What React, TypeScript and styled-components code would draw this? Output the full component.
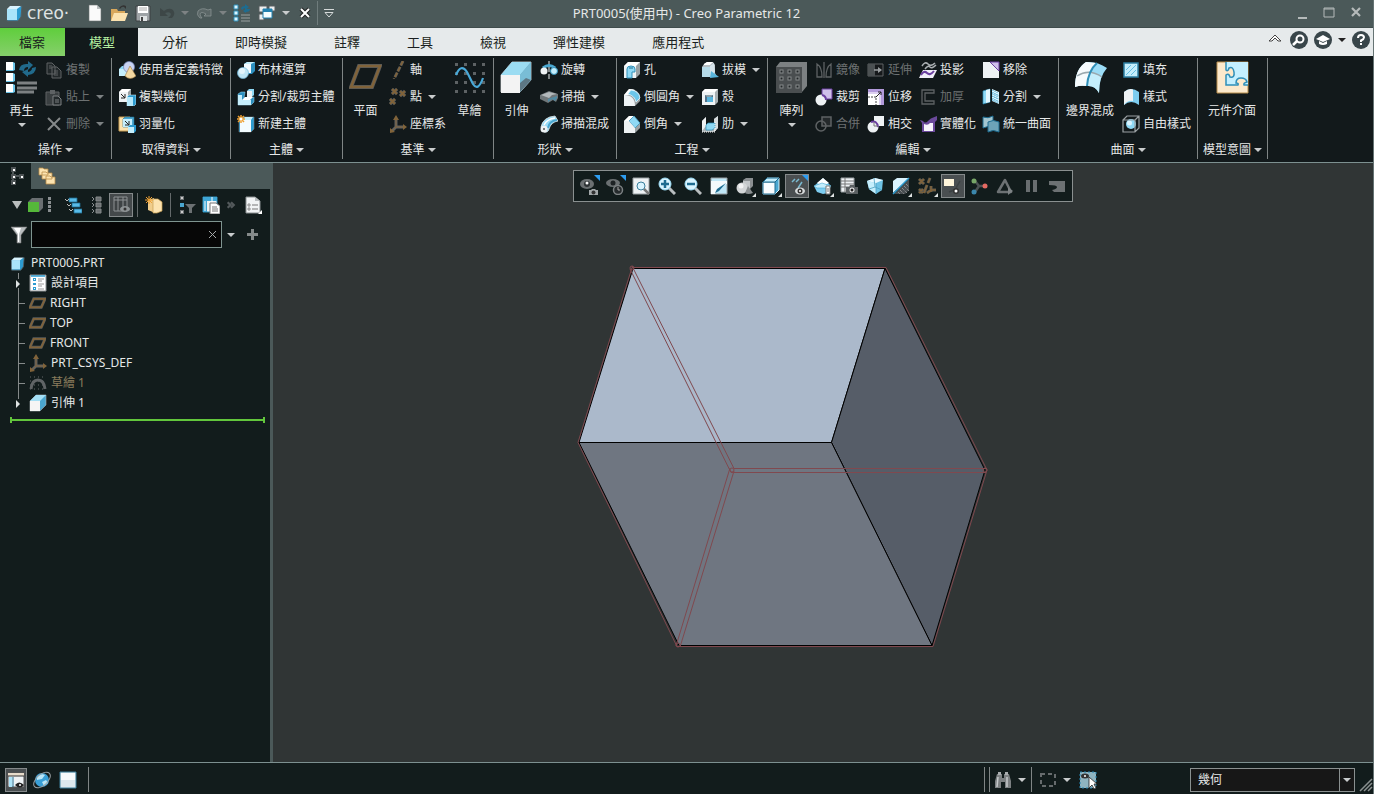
import React, { useState } from 'react';
import styled, { createGlobalStyle, css } from 'styled-components';

const c = {
  bar: '#4b5959',
  ribbon: '#12191b',
  panel: '#121c1c',
  line: '#7d9090',
  divider: '#7f8585',
  text: '#e6e8e8',
  dim: '#6d7172',
  tabs: '#e6eaeb',
  canvas: '#303535',
};

const GlobalStyle = createGlobalStyle`
  * { box-sizing: border-box; }
  body {
    margin: 0;
    background: ${c.canvas};
    color: ${c.text};
    font: 12px/20px "Noto Sans", "Noto Sans CJK TC", sans-serif;
  }
  button, input, select { font: inherit; color: inherit; }
  button { border: 0; padding: 0; background: none; cursor: pointer; }
`;

/* ---------- drawings ---------- */

const W = '#eef2f4';
const CY = '#8fd9f5';
const BL = '#2f8fb8';
const GR = '#5e6264';
const BR = '#80633a';
const PU = '#6b3fa0';

const small: Record<string, React.ReactNode> = {
  part: <><path d="M2 5l3-3h12l-1 11-3 4H2z" fill="#2c9bd0" stroke="#565e60" /><path d="M2 5h10v11H2z" fill="#a9e4fa" /><path d="M2 5l3-3h11l-4 3z" fill="#d9f4ff" /></>,
  newDoc: <><path d="M3 1h8l4 4v12H3z" fill="#fafafa" stroke="#6c7474" strokeWidth=".6" /><path d="M11 1v4h4z" fill="#b9bdbf" /></>,
  open: <><path d="M9 4q3-4 7-2v3l-2-2q-2-1-4 2z" fill="#333" /><path d="M1 5h6l1 2h7v10H1z" fill="#d9a85c" /><path d="M1 17l3-8h14l-3 8z" fill="#fce3b0" /></>,
  save: <><path d="M2 2h14v15H2z" fill="#9ea3a6" stroke="#3c4142" /><path d="M4 2h10v7H4z" fill="#fff" /><path d="M6 12h7v5H6z" fill="#dfe3e4" /><path d="M7 13h2v4H7z" fill="#444" /><path d="M5 4h8M5 6h8" stroke="#aaa" /></>,
  undo: <path d="M2 4v8h8L7 9q5-2 6 1 0 2-3 4h4q4-4 1-8-4-3-9 1z" fill="#3d4747" />,
  redo: <path d="M16 5v7H9l2-2Q6 7 5 10q0 2 2 4H5q-4-3-2-7 4-4 10-1z" fill="#5b6767" stroke="#889292" strokeWidth=".8" />,
  regen: <><path d="M1 1h4v4H1zM1 7h4v4H1zM1 13h4v4H1z" fill="#d9f4ff" stroke={BL} /><path d="M8 11h9M8 14h9M8 17h9" stroke="#9aa1a1" /><path d="M8 5q0-3 4-3V0l4 3-4 3V4q-2 0-2 2zM17 5q0 3-4 3v1l-3-2 3-2" fill="#1e6c90" /></>,
  windows: <><path d="M1 2h8v6H1zM11 2h6v5h-6zM1 10h5v6H1z" fill="#eceeee" stroke="#595f60" /><path d="M5 5h9v9H5z" fill="#f6feff" stroke="#2382b0" /><path d="M5 5h9v3H5z" fill="#2382b0" /></>,
  copy: <path d="M2 2h5l3 3v8H2zM7 6h5l4 4v7H7zM4 5h3M4 7h3M9 10h4M9 12h4M9 14h4" fill="#22282a" stroke={GR} />,
  paste: <><path d="M1 4h13v13H1z" fill="#3a3f41" stroke={GR} /><path d="M5 2h5v4H5z" fill={GR} /><path d="M8 8h5l3 3v6H8z" fill="#23292b" stroke="#7c8082" /><path d="M10 12h4M10 14h4" stroke="#7c8082" /></>,
  del: <path d="M3 3l12 12M15 3L3 15" stroke="#85898a" strokeWidth="2" />,
  udf: <><path d="M1 8l3-3h7v8l-2 2H1z" fill={CY} /><path d="M1 8h8v7H1z" fill="#c5eefc" /><circle cx="11" cy="6" r="5.500" fill="#c9d3f2" stroke="#7484b8" strokeWidth=".7" /><path d="M12 5l6 10q-6 5-11 0z" fill="#f4d8a2" stroke="#9d7b3e" strokeWidth=".6" /></>,
  copyGeom: <><path d="M1 4l3-3h9v10l-3 3H1z" fill="#9aa1a4" /><path d="M1 4l3-3h9l-3 3z" fill="#fff" /><path d="M1 4h9v10H1z" fill={W} /><path d="M3 6l4 4M7 6v4H3" stroke="#222" fill="none" /><path d="M9 9l2-2h7v9l-2 2H9z" fill="#2c9bd0" stroke="#d9f4ff" strokeWidth=".5" /><path d="M9 9h6v9H9z" fill="#b5e8fb" /></>,
  light: <><path d="M1 2h11v14H1z" fill="#fce3b0" stroke="#c79d52" /><path d="M5 4l2-2h9v8l-2 2H5z" fill="#4aa7d0" stroke="#1e6c90" strokeWidth=".6" /><path d="M5 4h9v8H5z" fill="#c5eefc" /><path d="M7 6l4 4M11 6v4H7" stroke="#222" fill="none" /><path d="M10 12l2-2h6v6l-2 2h-6z" fill="#2c9bd0" /><path d="M10 12h6v6h-6z" fill="#c5eefc" /></>,
  bool: <><path d="M7 3l3-2h8v9l-3 3H7z" fill="#2c8fbf" /><path d="M7 3h7v9H7z" fill="#f3fbff" /><path d="M7 3l3-2h8l-4 2z" fill="#c5eefc" /><circle cx="6" cy="12" r="5.500" fill="#bfe5f5" stroke="#6fb6d8" strokeWidth=".7" /><circle cx="5" cy="10" r="3" fill="#e4f5fc" /></>,
  splitBody: <><path d="M10 3l2-2h5v6l-2 2h-5z" fill="#8fd9f5" /><path d="M10 3h5v6h-5z" fill={W} /><path d="M1 6l3-2h4l-1 6h7l3-1v5l-3 3H1z" fill="#2c8fbf" stroke="#9bdcf6" strokeWidth=".5" /><path d="M1 7h4v5h9v5H1z" fill="#c5eefc" /><path d="M5 12l3-3h8l-3 3z" fill="#fff" /></>,
  newBody: <><path d="M2 5l3-3h12v12l-3 3H2z" fill="#2c9bd0" stroke="#7a8386" strokeWidth=".6" /><path d="M3 5h11v12H3z" fill="#f3fbff" /><path d="M5 5l3-3h8l-2 3z" fill="#c5eefc" /><path d="M4 0v8M0 4h8M1 1l6 6M7 1L1 7" stroke="#f0a030" strokeWidth="1.500" /><circle cx="4" cy="4" r="1.500" fill="#fff" /></>,
  axis: <><path d="M14 0L5 18" stroke="#55595b" strokeWidth="3" strokeDasharray="5 1.500" /><path d="M14 0L5 18" stroke={BR} strokeWidth="1.800" strokeDasharray="5 1.500" /></>,
  points: <><path d="M3 1l5 5m0-5L3 6M11 3l5 5m0-5l-5 5M1 11l5 5m0-5l-5 5" stroke="#50565a" strokeWidth="3.200" /><path d="M3 1l5 5m0-5L3 6M11 3l5 5m0-5l-5 5M1 11l5 5m0-5l-5 5" stroke={BR} strokeWidth="2" /></>,
  csys: <><path d="M7 3v9h8M7 12l-4 4" stroke={GR} strokeWidth="3" fill="none" /><path d="M7 3v9h8M7 12l-4 4" stroke={BR} fill="none" /><path d="M7 0l3 5H4zM18 12l-4 3V9zM1 18v-5l5 4z" fill={BR} /></>,
  revolve: <><path d="M9 0v4m0 2v5m0 2v5" stroke="#a2a8ab" strokeWidth="1.500" /><path d="M3 7q6-5 12 0" stroke="#4aa7d0" strokeWidth="3" fill="none" /><circle cx="4" cy="10" r="3.500" fill={W} /><circle cx="14" cy="10" r="3.500" fill="#c5eefc" stroke={BL} /></>,
  sweep: <><path d="M0 7l9-4 9 3v4l-2 4-3-2-5 3-8-4z" fill="#70777a" /><path d="M1 7l8-3 8 2-5 1-3 3z" fill="#b2b8bb" /><path d="M8 11l9-3v2l-2 3-3-2-4 3z" fill="#4f8aa3" /></>,
  sweptBlend: <><path d="M1 12Q3 2 15 1l3 5q-7 1-9 8-1 4-5 3z" fill="#9bdcf6" stroke="#dfe6e9" strokeWidth=".8" /><path d="M8 13q1-7 9-8" stroke="#4aa7d0" fill="none" strokeWidth="2" /><path d="M4 10Q7 4 15 3" stroke="#fff" fill="none" strokeWidth="1.500" /><circle cx="4" cy="14" r="3.500" fill={W} /><circle cx="4" cy="14" r="1" fill="#555" /></>,
  hole: <><path d="M1 5l4-4h12v12l-4 4H1z" fill="#9aa1a4" /><path d="M1 5l4-4h12l-4 4z" fill="#fff" /><path d="M1 5h12v12H1z" fill={W} /><path d="M4 17V8q0-3 4-3t4 3v3H9v6z" fill={CY} stroke={BL} /><path d="M6 7h4" stroke="#1e6c90" /></>,
  round: <><path d="M1 7l5-6q10 0 11 8v4l-5 5H1z" fill="#9aa1a4" /><path d="M1 7l5-6q4 0 6 1L8 7z" fill="#fff" /><path d="M8 2q8 1 9 8l-4 4Q12 8 5 6z" fill="#6cc6ea" stroke="#e2f5fd" strokeWidth=".8" /><path d="M1 7q11 0 11 11H1z" fill={W} /></>,
  chamfer: <><path d="M1 6l5-5h5l6 7v5l-5 5H1z" fill="#9aa1a4" /><path d="M1 6l5-5h5L6 6z" fill="#fff" /><path d="M6 6l5-5 6 7-5 5z" fill="#8fd9f5" stroke={BL} strokeWidth=".7" /><path d="M1 6h5l6 7v5H1z" fill={W} /></>,
  draft: <><path d="M3 3l3-2h6l2 3v8l2 4H1V6z" fill="#b9c1c5" /><path d="M3 3l3-2h6l-3 3H3z" fill="#fff" /><path d="M1 6h8v10H1z" fill="#b6dbe9" /><path d="M9 5l4-3 1 9-5 5z" fill="#d6e4ea" /><path d="M10 10l8 6-9 1z" fill="#59b5dc" /></>,
  shell: <><path d="M1 4l3-3h13v13l-3 3H1z" fill="#a7afb2" /><path d="M1 4l3-3h13l-3 3z" fill="#fff" /><path d="M1 4h13v13H1z" fill={W} /><path d="M4 7h8v7H4z" fill="#53738a" /><path d="M6 9h6v5H6z" fill="#58b4dc" /><path d="M4 7h8L10 9H6z" fill="#8d9fa8" /></>,
  rib: <><path d="M1 6l4-4v8h8V4l4-3v12l-4 4H1z" fill="#aab2b5" /><path d="M1 6l4-4v9l-4 5z" fill={W} /><path d="M13 4l4-3v12l-4 4z" fill="#d6dcde" /><path d="M5 10l2-2h7v5l-3 2H5z" fill={CY} stroke={BL} strokeWidth=".7" /><path d="M1 17h13V6" stroke="#fff" strokeDasharray="1 1" fill="none" /></>,
  mirror: <path d="M2 3q5 3 5 13H2zM16 3q-5 3-5 13h5zM9 1v16" fill="none" stroke={GR} strokeWidth="1.300" />,
  trim: <><path d="M7 1h10v10H7z" fill="#cfc0ea" stroke={PU} /><circle cx="6" cy="12" r="5.500" fill={W} /><path d="M7 7q4 1 4 5" stroke={PU} strokeWidth="2" fill="none" /></>,
  merge: <><path d="M7 2h9v9H7z" fill="#24292b" stroke={GR} strokeWidth="1.500" /><circle cx="6" cy="11" r="5" fill="none" stroke={GR} strokeWidth="1.500" /></>,
  extend: <><path d="M1 3h15v12H1z" fill="#16191b" stroke={GR} /><path d="M1 3h7v12H1z" fill="#4c5153" /><path d="M7 9h5" stroke="#9a9ea0" strokeWidth="1.500" /><path d="M11 6l4 3-4 3z" fill="#9a9ea0" /></>,
  offset: <><path d="M1 1h16v16H1z" fill="#fff" /><path d="M1 1h16v16h-3V4H1z" fill="#b29adb" /><path d="M1 4h13v13h-2V6H1z" fill="#dcd0f0" /><path d="M1 9h8v8" stroke="#444" strokeDasharray="2 1" fill="none" /><path d="M9 9l5-5m-3 0h3v3" stroke="#222" fill="none" /></>,
  intersect: <><path d="M7 1h10v10H7z" fill={W} /><circle cx="6" cy="12" r="5.500" fill={W} /><path d="M4 7q6-2 7 5" stroke={PU} strokeWidth="2" fill="none" /><path d="M7 7v4h4" stroke="#777" fill="none" /></>,
  project: <><path d="M3 5q3-5 6-2t7-1M6 8q3-4 5-2t6-2" stroke="#a9aeb1" strokeWidth="1.500" fill="none" /><path d="M4 9h14l-4 8H0z" fill="#f1eef8" /><path d="M2 14q3-5 6-2t7-2" stroke={PU} strokeWidth="2" fill="none" /></>,
  thicken: <path d="M15 2H3v14h12v-3H6V5h9z" fill="none" stroke={GR} strokeWidth="1.300" />,
  solidify: <><path d="M1 5l3 1q2 3 5 0t4-3l5-2v4l-2 2v10H3V8z" fill="#6b4a9c" /><path d="M5 9q4 2 6-1l3 0v8H5z" fill="#f7f4fc" /></>,
  remove: <><path d="M1 1h16v16H1z" fill={W} /><path d="M8 1h9v9z" fill="#cfc0ea" stroke={PU} /></>,
  split: <><path d="M1 3l7-2v13l-7 2z" fill={CY} stroke={BL} strokeWidth=".7" /><path d="M4 2l4-1v13l-4 1z" fill="#e3f6fd" /><path d="M10 1l7 3v12l-7-3z" fill="#d9f4ff" /><path d="M11 2v12M13 3v12M15 4v12M10 5l7 3M10 8l7 3M10 11l7 3" stroke="#4aa7d0" strokeDasharray="1 1" /></>,
  unify: <><path d="M1 2q5 2 10-1v9l-10 3z" fill="#a3c6d1" stroke="#1e6c90" /><path d="M6 7q5-3 11 0v10q-6-3-11 0z" fill="#6ca3b8" stroke="#1e6c90" /></>,
  fill: <><path d="M2 2h14v14H2z" fill="#c5eefc" stroke="#2c7fa3" strokeWidth="1.500" /><path d="M4 9l5-5M4 14L14 4M9 14l5-5" stroke="#65bfe4" /></>,
  style: <><path d="M2 4q7-6 15 0v13q-8-6-15 0z" fill="#7dcdf0" /><path d="M2 4q5-4 9-2.500v11.500q-5-1-9 4z" fill={W} /></>,
  freestyle: <><circle cx="9" cy="9" r="5" fill="#8fd9f5" /><circle cx="7.500" cy="8" r="2.500" fill="#d9f4ff" /><path d="M1 5l4-4h12v12l-4 4H1zM1 5h12v12M13 5l4-4" fill="none" stroke="#9aa0a3" strokeWidth="1.200" /></>,
  planeS: <><path d="M5 4h12l-4 9H1z" fill="none" stroke="#55595b" strokeWidth="3" /><path d="M5 4h12l-4 9H1z" fill="none" stroke={BR} strokeWidth="1.800" /></>,
  sketchS: <><path d="M1 3h16M1 7h16M1 11h16M1 15h16" stroke="#65696b" strokeDasharray="1 3" /><path d="M2 15q1-9 7-9t7 9" stroke="#606466" strokeWidth="3" fill="none" /></>,
  extrudeS: <><path d="M1 7l6-6h10v10l-6 6H1z" fill="#4aa7d0" stroke="#aab2b5" strokeWidth=".6" /><path d="M1 7l6-6h10l-6 6z" fill="#a5e0f6" /><path d="M1 7h10v10H1z" fill="#f5f5f5" /></>,
  designItems: <><path d="M1 1h16v16H1z" fill="#fff" stroke="#8a8f91" /><path d="M2 2h14" stroke="#2c9bd0" strokeWidth="1.500" /><path d="M4 4h3v3H4zM4 9h3v2H4zM4 13h3v3H4z" fill="#2c9bd0" /><path d="M5 5h1v1H5zM5 14h1v1H5z" fill="#fff" /><path d="M9 5h6M9 7h4M9 10h6M9 12h4M9 15h6" stroke="#999" /></>,
  treeTab: <><path d="M6 2v14M6 9h8" stroke="#8d9395" /><path d="M4 0h5v5H4zM4 7h5v5H4zM4 13h5v5H4zM12 7h5v5h-5z" fill="#4d5355" /><path d="M6 2h2v2H6zM6 9h2v2H6zM6 15h2v2H6zM14 9h2v2h-2z" fill="#fff" /></>,
  folders: <><path d="M1 1h4l1 1h4v6H1zM4 5h4l1 1h5v6H4zM8 9h4l1 1h4v7H8z" fill="#fce3b0" stroke="#b98d4a" strokeWidth=".8" /></>,
  greenCube: <><path d="M2 6l4-4h11v10l-4 4H2z" fill="#6a6f71" /><path d="M2 6h11v10H2z" fill="#55b83a" /></>,
  dots: <path d="M3 1h3v3H3zM3 5h3v3H3zM3 9h3v3H3zM3 13h3v3H3z" fill="#8a8f91" />,
  treeExp: <><path d="M5 2h8v4H5zM8 7h8v4H8zM10 13h8v4h-8z" fill="#58bbe8" stroke="#1e6c90" strokeWidth=".8" /><path d="M1 3l2 2 2-2M3 8l2 2 2-2M5 13l2 2 2-2" stroke="#bbb" fill="none" /></>,
  treeCol: <><path d="M8 1h5v4H8zM8 7h5v4H8zM8 13h5v4H8z" fill="#6c7173" stroke="#85898a" /><path d="M4 1l2 2-2 2M4 7l2 2-2 2M4 13l2 2-2 2" stroke="#8a8f91" fill="none" /></>,
  columns: <><path d="M2 1h13v14H2zM6 1v14M11 1v14M2 4h13" fill="#3e4345" stroke="#8d9294" /><ellipse cx="13" cy="13" rx="5" ry="3" fill="#8d9294" /><circle cx="13" cy="13" r="1.500" fill="#333" /></>,
  tag: <><path d="M3 4l6-2 1 15-7-3z" fill="#f0cd8c" /><path d="M8 3h5l4 3v9l-5 2H8z" fill="#fce3b0" stroke="#c79d52" strokeWidth=".7" /><path d="M4 0v8M0 4h8M1 1l6 6M7 1L1 7" stroke="#f0a030" /></>,
  treeFilter: <><path d="M2 0h4v4H2zM2 7h4v4H2zM2 14h4v4H2z" fill="#6c7173" /><path d="M3 1h2v2H3zM3 15h2v2H3z" fill="#ccc" /><path d="M2 7h4v4H2z" fill="#4aa7d0" /><path d="M7 8h11l-4 4v5h-3v-5z" fill="#6c7173" /></>,
  table: <><path d="M1 1h14v15H1z" fill={W} stroke={BL} /><path d="M1 1h14v4H1zM1 5h4v11H1z" fill="#3fa6d6" /><path d="M3 5v10M10 1v7" stroke="#fff" /><path d="M8 7h6l4 3v8H8z" fill="#fff" stroke="#777" /><path d="M10 11h5M10 13h6M10 15h6" stroke="#777" /></>,
  more: <path d="M3 4l5 5-5 5M9 4l5 5-5 5" stroke="#53595b" strokeWidth="4" fill="none" />,
  list: <><path d="M2 1h9l5 4v12H2z" fill="#f2f4f5" stroke="#8a8f91" /><path d="M11 1v4h5z" fill="#b9bdbf" /><path d="M4 8h2v2H4zM4 12h2v2H4z" fill="none" stroke="#777" strokeWidth=".8" /><path d="M8 9h6M8 13h6" stroke="#777" /><path d="M18 14v4h-4z" fill="#fff" /></>,
  funnel: <><path d="M1 1h16l-6 8v8H7V9z" fill="#b9bec0" stroke="#777" strokeWidth=".6" /><path d="M4 2h7L9 8v8H8V8z" fill="#fff" /></>,
  eyeCam: <><ellipse cx="7" cy="7" rx="7" ry="5" fill="#6b7072" /><circle cx="7" cy="7" r="3" fill="#2c3133" /><circle cx="7" cy="6" r="1.500" fill="#fff" /><path d="M9 13h2l1-1h3l1 1h2v5H9z" fill="#a2a7a9" /><circle cx="13.500" cy="15.500" r="2" fill="#333" /></>,
  eyeClock: <><ellipse cx="7" cy="6" rx="7" ry="4" fill="#6b7072" /><circle cx="7" cy="6" r="2.500" fill="#1d2224" /><circle cx="12" cy="13" r="4.500" fill="#262b2d" stroke="#7c8183" strokeWidth="1.500" /><path d="M12 10v3h2" stroke="#aaa" fill="none" /></>,
  refit: <><path d="M1 1h16v16H1z" fill={W} stroke="#9aa1a4" /><circle cx="9" cy="9" r="4" fill="#d9f4ff" stroke="#3a7f9c" /><path d="M12 12l5 5" stroke="#777" strokeWidth="2.500" /></>,
  zoomIn: <><path d="M11 11l6 6" stroke="#b9bec0" strokeWidth="3" /><circle cx="7" cy="7" r="6" fill="#d9f4ff" stroke="#9bdcf6" /><path d="M3 7h8M7 3v8" stroke="#1e6c90" strokeWidth="2.500" /></>,
  zoomOut: <><path d="M11 11l6 6" stroke="#b9bec0" strokeWidth="3" /><circle cx="7" cy="7" r="6" fill="#d9f4ff" stroke="#9bdcf6" /><path d="M3 7h8" stroke="#1e6c90" strokeWidth="2.500" /></>,
  repaint: <><path d="M1 1h16v16H1z" fill="#bfe7f6" stroke="#9aa1a4" /><path d="M1 4h16v3Q9 8 5 17H1z" fill="#f4fafc" /><path d="M16 6l-7 8-4 2 2-4z" fill="#1e6c90" /></>,
  shading: <><path d="M7 3l3-2h7v8l-3 3H7z" fill="#8a8f91" /><path d="M7 4h7v8H7z" fill="#c3c7c9" /><circle cx="6" cy="11" r="5.500" fill="#d3d6d7" /><circle cx="5" cy="9" r="2.500" fill="#f2f3f3" /><path d="M12 9l5 7q-5 2-8 0z" fill="#8a8f91" /></>,
  saved: <><path d="M1 5l4-4h12v12l-4 4H1z" fill="#4aa7d0" stroke="#d9f4ff" /><path d="M1 5h12v12H1z" fill="#fafdff" stroke="#1e6c90" /><path d="M1 5l4-4h12l-4 4z" fill="#c5eefc" stroke="#1e6c90" /></>,
  annot: <><path d="M4 5l3-3M8 5l3-3M10 11l4-6" stroke="#79b9cf" strokeWidth="1.500" /><ellipse cx="12" cy="14" rx="5" ry="3.500" fill="#d6dadb" /><circle cx="12" cy="14" r="2.500" fill="#333" /><circle cx="12" cy="14" r="1" fill="#fff" /></>,
  views: <><path d="M9 1l8 8-3 7-5 1-6-2-3-6z" fill="#7dcdf0" /><path d="M9 1l6 5-7 3-5-3z" fill="#fff" /><path d="M0 9l8-3 9 3-3 2H3z" fill="#c5eefc" stroke="#4aa7d0" strokeWidth=".6" /><path d="M12 9h4v8h-4z" fill="#fff" stroke="#777" /><path d="M13 12h2M13 14h2" stroke="#777" /></>,
  viewMgr: <><path d="M1 1h13v14H1z" fill={W} stroke="#9aa1a4" /><path d="M1 4h13M1 7h13M1 10h8M5 1v14" stroke="#777" /><path d="M6 10h3l1-2h4l1 2h3v7H6z" fill="#5b6062" /><circle cx="12" cy="13" r="2.500" fill="#eee" /><circle cx="12" cy="13" r="1.500" fill="#222" /></>,
  persp: <><path d="M1 4l8-3 8 2-1 10-6 4-7-5z" fill="#6ec2e4" /><path d="M1 4l9 2v11l-7-5z" fill="#c5eefc" /><path d="M1 4l8-3 8 2-7 3z" fill="#e9f8fe" /><path d="M10 6v11M3 12l6-2 7 3M8 1l1 9" stroke="#4a9fc2" fill="none" strokeWidth=".8" /></>,
  section: <><path d="M1 16V4l4-3h12z" fill="#d9f4ff" /><path d="M17 2v11l-4 4H2z" fill="#484e51" /><path d="M17 1L1 17" stroke="#2c9bd0" strokeWidth="1.500" /><path d="M6 15l2 2M8 13l4 4M10 11l5 5M12 9l5 5M14 7l3 3" stroke="#aaa" strokeDasharray="1 1" /></>,
  datum: <><path d="M1 2l5 5m0-5L1 7M12 1l-2 5m-1 2l-3 8M13 9v6M13 13h5M13 13l-4 3M1 12l4 4m0-4l-4 4" stroke="#5d5a50" strokeWidth="3" fill="none" /><path d="M1 2l5 5m0-5L1 7M12 1l-2 5m-1 2l-3 8M13 9v6M13 13h5M13 13l-4 3M1 12l4 4m0-4l-4 4" stroke={BR} strokeWidth="1.500" fill="none" /></>,
  annotBox: <><path d="M0 2h10v7H0z" fill="#fff6dc" /><path d="M12 11l4-7M5 15l5-2" stroke="#3c4143" strokeWidth="1.500" /><circle cx="12" cy="14" r="3" fill="#333" /><circle cx="12" cy="14" r="1.500" fill="#fff" /></>,
  nodes: <><path d="M5 4l4 5-4 6M9 9h5" stroke="#4c5153" strokeWidth="2.500" fill="none" /><circle cx="4" cy="4" r="2.500" fill="#77a567" /><circle cx="15" cy="9" r="2.500" fill="#e56a62" /><circle cx="4" cy="15" r="2.500" fill="#3b87ac" /></>,
  triangle: <><path d="M9 3l6 12H2z" fill="none" stroke="#6c7173" strokeWidth="2.500" strokeLinejoin="round" /><path d="M12 10l5 4-5 4z" fill="#7e8385" /></>,
  pause: <path d="M4 3h4v12H4zM11 3h4v12h-4z" fill="#696e70" />,
  resume: <path d="M1 4h16v11H6l-2-2q5-1 5-3T1 8z" fill="#6c7173" />,
  layout: <><path d="M1 2h16v14H1z" fill={W} stroke="#555" /><path d="M1 2h16v3H1z" fill="#e7dccb" /><path d="M1 5h16" stroke="#333" /><path d="M2 6h3v10H2z" fill="#aee4f8" /><path d="M6 6v10" stroke="#1e6c90" /><path d="M8 14q4-5 9 0-4 5-9 0z" fill="#222" /><circle cx="13" cy="14" r="1" fill="#fff" /></>,
  globe: <><circle cx="9" cy="9" r="7" fill="#3a9fd6" /><path d="M4 6q4-4 8-2l-3 4-5 1zM9 11l4-2 2 3-4 3z" fill="#b9e6f8" /><ellipse cx="9" cy="9" rx="10" ry="5.500" transform="rotate(-42 9 9)" fill="none" stroke="#9aa0a3" /></>,
  blank: <><path d="M1 1h16v16H1z" fill="#dde8ed" stroke="#3a7f9c" /><path d="M2 2h14v7H2z" fill="#f6fafc" /></>,
  find: <><path d="M3 3h5v4h2V3h5l2 7v7h-6v-6H7v6H1v-7z" fill="#7c8082" /><path d="M4 1h3v3H4zM11 1h3v3h-3z" fill="#a9adaf" /><path d="M4 6l-1 10M13 6v10" stroke="#c5c9cb" strokeWidth="1.500" /></>,
  region: <path d="M2 3h14v12H2z" fill="none" stroke="#666b6d" strokeWidth="2" strokeDasharray="4 3" />,
  pick: <><path d="M1 1h16v16H1z" fill="#8fb4c0" stroke="#2382b0" strokeDasharray="2 2" /><ellipse cx="6" cy="5" rx="4" ry="2.500" fill="#333" /><circle cx="6" cy="5" r="1" fill="#fff" /><path d="M10 6v11l3-3 2 4 2-1-2-4h3z" fill="#fff" stroke="#222" strokeWidth=".8" /></>,
  search: <><circle cx="9" cy="9" r="9" fill="#39464a" /><circle cx="10" cy="8" r="3.500" fill="none" stroke="#fff" strokeWidth="2" /><path d="M7 10l-4 4" stroke="#fff" strokeWidth="2.500" /></>,
  learn: <><circle cx="9" cy="9" r="9" fill="#39464a" /><path d="M2 8l7-4 7 4-7 3z" fill="#fff" /><path d="M5 10v3q4 2 8 0v-3l-4 2z" fill="#fff" /></>,
  help: <><circle cx="9" cy="9" r="9" fill="#39464a" /><path d="M6 7q0-3 3-3t3 2.500Q12 8 9 9.500V11" stroke="#fff" strokeWidth="2" fill="none" /><path d="M8 12h2v2H8z" fill="#fff" /></>,
  collapse: <path d="M3 10l6-6 6 6h-3L9 7l-3 3z" fill="#fff" stroke="#444" />,
  min: <path d="M5 13h9v2H5z" fill="#b5baba" />,
  max: <path d="M4 4h10v9H4zM4 5h10" fill="none" stroke="#b5baba" />,
  x: <path d="M5 4l8 8M13 4l-8 8" stroke="#b5baba" strokeWidth="2.200" />,
};

const big: Record<string, React.ReactNode> = {
  regenerate: <><path d="M1 1h7v8H1zM1 12h7v8H1zM1 23h7v8H1z" fill="#fff" /><path d="M8 1l2 1v7l-2 1H1V9h7zM8 12l2 1v7l-2 1H1v-1h7zM8 23l2 1v7l-2 1H1v-1h7z" fill="#6cc6ea" /><path d="M12 22h20M12 27h20M12 31h17" stroke="#7d8183" strokeWidth="3" /><path d="M14 9q1-7 9-6V0l5 4-5 5V6q-4 0-4 4zM31 6q0 7-8 8v2l-6-5 6-3v3q4-1 4-4z" fill="#216a8c" /></>,
  plane: <><path d="M10 5h21l-8 21H2z" fill="none" stroke="#55595b" strokeWidth="4" /><path d="M10 5h21l-8 21H2z" fill="none" stroke={BR} strokeWidth="2.500" /></>,
  sketch: <><g fill="#5d6264">{[3, 12, 21, 30].map((y) => [3, 12, 21, 30].map((x) => <rect key={`${x}-${y}`} x={x - 1} y={y - 1} width="3" height="3" />))}</g><path d="M3 14q5-12 11-3l6 12q5 8 10-6" fill="none" stroke="#49a9d8" strokeWidth="2.200" /></>,
  extrude: <><path d="M1 14L12 1h19v18L20 31H1z" fill="#6fa7bd" stroke="#aab2b5" /><path d="M1 14L12 1h19L20 14z" fill="#9bdcf2" /><path d="M31 1v18l-11 12V14z" fill="#79bdd6" /><path d="M31 19L20 31v-9l6-5z" fill="#5d7784" /><path d="M1 14h19v18H1z" fill="#f3f3f3" /></>,
  pattern: <><path d="M1 6l4-5h27v24l-5 6H1z" fill="#7c8082" /><path d="M1 6h26v26H1z" fill="#4a4e50" /><g fill="#222729" stroke="#85898a">{[10, 17, 25].map((y) => [6, 14, 22].map((x) => <rect key={`${x}-${y}`} x={x - 1} y={y - 1} width="3" height="3" />))}</g></>,
  boundary: <><path d="M1 26Q1 8 12 1q11-1 21 6-8 9-8 25-4-8-12-7-7-1-12 1z" fill="#9bdcf6" /><path d="M1 26Q1 8 12 1l11 1q-9 8-10 23-7-1-12 1z" fill="#f6fbfd" /><path d="M13 25q0-8 4-13 6 0 10 4-2 7-2 16-4-8-12-7z" fill="#c5eefc" /><path d="M3 15q12-8 25 1" fill="none" stroke="#9aa8ae" strokeWidth="1.500" /><path d="M23 2q-9 8-10 23" fill="none" stroke={BL} strokeWidth="2" /></>,
  component: <><path d="M1 1h31v31H1z" fill="#fce9cc" stroke="#b98d4a" /><path d="M10 1h22v23H10z" fill="#c5f0ff" /><path d="M10 9q2 2 3-2 4-2 5 4t-4 5q-1-4-4-2z" fill="#fce9cc" /><path d="M22 24q1-2-2-2 0-5 5-5t6 4q-4 1-3 3z" fill="#fce9cc" /><path d="M10 1v8q2 2 3-2 4-2 5 4t-4 5q-1-4-4-2v10h12q1-2-2-2 0-5 5-5t6 4q-4 1-3 3h4" fill="none" stroke={BL} strokeWidth="1.500" /></>,
};

const Svg = styled.svg`
  display: block;
  flex: none;
`;

const Icon = ({ name, size = 18 }: { name: string; size?: number }) => (
  <Svg width={size} height={size} viewBox={size > 24 ? '0 0 33 33' : '0 0 18 18'} aria-hidden="true">
    {size > 24 ? big[name] : small[name]}
  </Svg>
);

const Caret = styled.span<{ $dim?: boolean; $dark?: boolean }>`
  flex: none;
  width: 0;
  border: 4px solid transparent;
  border-top-color: ${(p) => (p.$dark ? '#222' : p.$dim ? '#7d8283' : '#c9cccd')};
  border-bottom: 0;
`;

/* ---------- frame ---------- */

const Frame = styled.div`
  display: flex;
  flex-direction: column;
  min-height: 100vh;
  border-right: 1px solid #667474;
`;

const TitleBar = styled.header`
  display: grid;
  grid-template-columns: 1fr auto 1fr;
  align-items: center;
  height: 28px;
  padding-bottom: 2px;
  background: ${c.bar};
  border-bottom: 1px solid #3f4c4c;
`;

const QuickBar = styled.div`
  display: flex;
  align-items: center;
  padding-left: 5px;
`;

const Brand = styled.span`
  margin: 0 14px 0 4px;
  font: 17px/24px "DejaVu Sans", sans-serif;
  color: #dfe3e3;
`;

const QuickButton = styled.button<{ $w?: number }>`
  display: flex;
  align-items: center;
  justify-content: center;
  width: ${(p) => p.$w ?? 24}px;
  height: 24px;
`;

const QuickDivider = styled.span`
  width: 1px;
  height: 24px;
  background: #6f7c7c;
`;

const Title = styled.h1`
  margin: 0;
  font-size: 13px;
  font-weight: 400;
  line-height: 24px;
`;

const WindowButtons = styled.div`
  display: flex;
  justify-content: flex-end;
  gap: 9px;
  padding-right: 8px;
`;

const TabBar = styled.nav`
  display: flex;
  height: 28px;
  background: ${c.tabs};
`;

const Tab = styled.button<{ $kind?: 'file' | 'active' }>`
  padding: 0 23px 0 24px;
  font-size: 13px;
  color: #1a1f20;
  ${(p) => p.$kind === 'file' && css`
    padding: 0 20px 0 19px;
    background: linear-gradient(#5fce3c, #86cf6b);
  `}
  ${(p) => p.$kind === 'active' && css`
    background: ${c.ribbon};
    color: #b4efa0;
  `}
`;

const TabTools = styled.div`
  display: flex;
  align-items: center;
  gap: 6px;
  margin-left: auto;
  padding: 0 3px 4px 0;
`;

/* ---------- ribbon ---------- */

const Ribbon = styled.section`
  display: flex;
  background: ${c.ribbon};
  border-bottom: 1px solid ${c.line};
`;

const Group = styled.div<{ $w: number }>`
  display: flex;
  flex-direction: column;
  flex: none;
  width: ${(p) => p.$w}px;
  margin: 2px 0 3px;
  border-right: 1px solid ${c.divider};
`;

const GroupBody = styled.div<{ $pad: number }>`
  display: flex;
  height: 82px;
  padding-left: ${(p) => p.$pad}px;
`;

const GroupMenu = styled.button`
  display: flex;
  align-items: center;
  justify-content: center;
  gap: 3px;
  height: 19px;
  white-space: nowrap;
`;

const BigButton = styled.button<{ $w: number }>`
  display: flex;
  flex-direction: column;
  align-items: center;
  flex: none;
  width: ${(p) => p.$w}px;
  margin-right: 7px;
  padding-top: 3px;
  white-space: nowrap;

  & > svg { margin-bottom: 7px; }
  & > ${Caret} { margin-top: 2px; }
`;

const Column = styled.div<{ $w?: number }>`
  display: grid;
  grid-template-rows: repeat(3, 27px);
  flex: none;
  width: ${(p) => (p.$w ? `${p.$w}px` : 'auto')};
  margin-top: -2px;
`;

const Command = styled.button<{ $dim?: boolean }>`
  display: flex;
  align-items: center;
  gap: 3px;
  white-space: nowrap;
  color: ${(p) => (p.$dim ? c.dim : c.text)};

  & > ${Caret} { margin-left: 3px; }
`;

type Cmd = { icon: string; label: string; menu?: boolean; dim?: boolean };
type Part =
  | { kind: 'big'; icon: string; label: string; w: number; menu?: boolean }
  | { kind: 'col'; w?: number; items: Cmd[] };

const cmd = (icon: string, label: string, flags = ''): Cmd => ({
  icon,
  label,
  menu: flags.includes('m'),
  dim: flags.includes('d'),
});

const groups: { name: string; w: number; pad: number; parts: Part[] }[] = [
  { name: '操作', w: 112, pad: 5, parts: [
    { kind: 'big', icon: 'regenerate', label: '再生', w: 33, menu: true },
    { kind: 'col', items: [cmd('copy', '複製', 'd'), cmd('paste', '貼上', 'dm'), cmd('del', '刪除', 'dm')] },
  ] },
  { name: '取得資料', w: 119, pad: 6, parts: [
    { kind: 'col', items: [cmd('udf', '使用者定義特徵'), cmd('copyGeom', '複製幾何'), cmd('light', '羽量化')] },
  ] },
  { name: '主體', w: 112, pad: 6, parts: [
    { kind: 'col', items: [cmd('bool', '布林運算'), cmd('splitBody', '分割/裁剪主體'), cmd('newBody', '新建主體')] },
  ] },
  { name: '基準', w: 151, pad: 6, parts: [
    { kind: 'big', icon: 'plane', label: '平面', w: 33 },
    { kind: 'col', w: 64, items: [cmd('axis', '軸'), cmd('points', '點', 'm'), cmd('csys', '座標系')] },
    { kind: 'big', icon: 'sketch', label: '草繪', w: 33 },
  ] },
  { name: '形狀', w: 123, pad: 6, parts: [
    { kind: 'big', icon: 'extrude', label: '引伸', w: 33 },
    { kind: 'col', items: [cmd('revolve', '旋轉'), cmd('sweep', '掃描', 'm'), cmd('sweptBlend', '掃描混成')] },
  ] },
  { name: '工程', w: 151, pad: 6, parts: [
    { kind: 'col', w: 78, items: [cmd('hole', '孔'), cmd('round', '倒圓角', 'm'), cmd('chamfer', '倒角', 'm')] },
    { kind: 'col', items: [cmd('draft', '拔模', 'm'), cmd('shell', '殼'), cmd('rib', '肋', 'm')] },
  ] },
  { name: '編輯', w: 291, pad: 7, parts: [
    { kind: 'big', icon: 'pattern', label: '陣列', w: 33, menu: true },
    { kind: 'col', w: 52, items: [cmd('mirror', '鏡像', 'd'), cmd('trim', '裁剪'), cmd('merge', '合併', 'd')] },
    { kind: 'col', w: 52, items: [cmd('extend', '延伸', 'd'), cmd('offset', '位移'), cmd('intersect', '相交')] },
    { kind: 'col', w: 63, items: [cmd('project', '投影'), cmd('thicken', '加厚', 'd'), cmd('solidify', '實體化')] },
    { kind: 'col', items: [cmd('remove', '移除'), cmd('split', '分割', 'm'), cmd('unify', '統一曲面')] },
  ] },
  { name: '曲面', w: 139, pad: 6, parts: [
    { kind: 'big', icon: 'boundary', label: '邊界混成', w: 50 },
    { kind: 'col', items: [cmd('fill', '填充'), cmd('style', '樣式'), cmd('freestyle', '自由樣式')] },
  ] },
  { name: '模型意圖', w: 70, pad: 9, parts: [
    { kind: 'big', icon: 'component', label: '元件介面', w: 50 },
  ] },
];

/* ---------- model tree ---------- */

const Main = styled.main`
  display: flex;
  flex: 1;
`;

const Side = styled.aside`
  flex: none;
  width: 273px;
  background: ${c.panel};
  border-right: 3px solid ${c.bar};
`;

const SideTabs = styled.div`
  display: flex;
  height: 26px;
  background: ${c.bar};
`;

const SideTab = styled.button<{ $active?: boolean }>`
  display: flex;
  align-items: center;
  justify-content: center;
  width: 31px;
  background: ${(p) => (p.$active ? c.panel : 'none')};
`;

const TreeTools = styled.div`
  display: flex;
  align-items: center;
  height: 32px;
  padding-left: 11px;
`;

const TreeButton = styled.button<{ $w?: number; $on?: boolean }>`
  display: flex;
  align-items: center;
  justify-content: center;
  width: ${(p) => p.$w ?? 24}px;
  height: 24px;
  ${(p) => p.$on && css`
    background: #44494b;
    border: 1px solid #84898a;
  `}
`;

const TreeDivider = styled.span`
  width: 1px;
  height: 24px;
  margin: 0 4px;
  background: #646a6b;
`;

const FilterRow = styled.div`
  display: flex;
  align-items: center;
  gap: 5px;
  height: 27px;
  padding-left: 10px;
`;

const FilterBox = styled.div`
  display: flex;
  width: 191px;
  height: 27px;
  margin-left: -2px;
  background: #070707;
  border: 1px solid #7f9490;
`;

const FilterInput = styled.input`
  flex: 1;
  min-width: 0;
  padding: 0 4px;
  background: none;
  border: 0;
  outline: 0;
`;

const Tree = styled.ul`
  margin: 5px 5px 0 10px;
  padding: 0 0 6px;
  list-style: none;
  border-bottom: 2px solid #62c63c;
  position: relative;

  &::before, &::after {
    content: '';
    position: absolute;
    bottom: -4px;
    width: 2px;
    height: 6px;
    background: #62c63c;
  }
  &::before { left: 0; }
  &::after { right: 0; }
`;

const Branch = styled.ul`
  margin: 0;
  padding: 0;
  list-style: none;
`;

const Node = styled.div<{ $dim?: boolean }>`
  display: flex;
  align-items: center;
  gap: 6px;
  height: 20px;
  color: ${(p) => (p.$dim ? '#8b7d5c' : c.text)};
`;

const ChildNode = styled(Node)`
  gap: 4px;
`;

const Twig = styled.svg`
  display: block;
  flex: none;
  width: 15px;
  height: 20px;
`;

const children = [
  { icon: 'designItems', label: '設計項目', open: true },
  { icon: 'planeS', label: 'RIGHT' },
  { icon: 'planeS', label: 'TOP' },
  { icon: 'planeS', label: 'FRONT' },
  { icon: 'csys', label: 'PRT_CSYS_DEF' },
  { icon: 'sketchS', label: '草繪 1', dim: true },
  { icon: 'extrudeS', label: '引伸 1', open: true },
];

/* ---------- graphics area ---------- */

const Canvas = styled.section`
  position: relative;
  flex: 1;
  display: flex;
  background: ${c.canvas};
`;

const ModelView = styled.svg`
  display: block;
  flex: 1;
  width: 100%;
  min-width: 0;
`;

const ViewBar = styled.div`
  position: absolute;
  top: 7px;
  left: 50%;
  transform: translateX(-50%);
  display: flex;
  align-items: center;
  height: 32px;
  padding: 0 2px;
  background: ${c.panel};
  border: 1px solid #8a9090;
`;

const ViewButton = styled.button<{ $on?: boolean; $menu?: boolean; $flag?: boolean }>`
  position: relative;
  display: flex;
  align-items: center;
  justify-content: center;
  width: 24px;
  height: 24px;
  margin: 0 1px;
  border: 1px solid ${(p) => (p.$on ? '#84898a' : 'transparent')};
  background: ${(p) => (p.$on ? '#4a4f51' : 'none')};
  ${(p) => p.$menu && css`
    &::after {
      content: '';
      position: absolute;
      right: 0;
      bottom: 0;
      border: 2px solid #dfe3e3;
      border-top-color: transparent;
      border-left-color: transparent;
    }
  `}
  ${(p) => p.$flag && css`
    &::before {
      content: '';
      position: absolute;
      right: 0;
      top: 0;
      border: 3px solid #2d9cf0;
      border-bottom-color: transparent;
      border-left-color: transparent;
    }
  `}
`;

const viewTools = [
  { icon: 'eyeCam', label: '外觀檢視', flag: true },
  { icon: 'eyeClock', label: '檢視記錄', flag: true },
  { icon: 'refit', label: '重新調整' },
  { icon: 'zoomIn', label: '放大' },
  { icon: 'zoomOut', label: '縮小' },
  { icon: 'repaint', label: '重新繪製' },
  { icon: 'shading', label: '著色', menu: true },
  { icon: 'saved', label: '已儲存方向', menu: true },
  { icon: 'annot', label: '顯示', on: true, flag: true },
  { icon: 'views', label: '顯示樣式', menu: true },
  { icon: 'viewMgr', label: '檢視管理員' },
  { icon: 'persp', label: '透視圖' },
  { icon: 'section', label: '截面', menu: true },
  { icon: 'datum', label: '基準顯示', menu: true },
  { icon: 'annotBox', label: '註解顯示', on: true },
  { icon: 'nodes', label: '旋轉中心' },
  { icon: 'triangle', label: '模擬' },
  { icon: 'pause', label: '暫停' },
  { icon: 'resume', label: '繼續' },
];

/* ---------- status bar ---------- */

const Status = styled.footer`
  display: flex;
  align-items: center;
  height: 32px;
  padding: 2px 0 0 5px;
  background: ${c.panel};
  border-top: 1px solid ${c.line};
`;

const StatusButton = styled.button<{ $on?: boolean }>`
  display: flex;
  align-items: center;
  justify-content: center;
  width: 22px;
  height: 24px;
  margin-right: 4px;
  border: 1px solid ${(p) => (p.$on ? '#84898a' : 'transparent')};
  background: ${(p) => (p.$on ? '#4a4f51' : 'none')};

  ${Caret} + & { margin-left: 6px; }
`;

const StatusDivider = styled.span<{ $gap?: number }>`
  width: 1px;
  height: 25px;
  margin: 0 ${(p) => p.$gap ?? 5}px;
  background: ${c.divider};
`;

const StatusEnd = styled.div`
  display: flex;
  align-items: center;
  margin-left: auto;
`;

const SelectBox = styled.div`
  display: flex;
  align-items: center;
  position: relative;
  width: 165px;
  height: 24px;
  margin: 0 4px 0 87px;
  background: #171717;
  border: 1px solid #8a9090;
`;

const FilterSelect = styled.select`
  appearance: none;
  width: 100%;
  height: 22px;
  padding: 0 20px 0 7px;
  background: none;
  border: 0;
  outline: 0;
`;

const SelectArrow = styled.span`
  position: absolute;
  inset: 0 0 0 auto;
  display: flex;
  align-items: center;
  justify-content: center;
  width: 15px;
  border-left: 1px solid #8a9090;
  pointer-events: none;
`;

export default function App() {
  const [query, setQuery] = useState('');
  return (
    <>
      <GlobalStyle />
      <Frame>
        <TitleBar>
          <QuickBar>
            <Icon name="part" />
            <Brand>creo·</Brand>
            <QuickButton aria-label="新建"><Icon name="newDoc" /></QuickButton>
            <QuickButton aria-label="開啟"><Icon name="open" /></QuickButton>
            <QuickButton aria-label="儲存"><Icon name="save" /></QuickButton>
            <QuickButton aria-label="復原"><Icon name="undo" /></QuickButton>
            <QuickButton $w={12} aria-label="復原清單"><Caret $dim /></QuickButton>
            <QuickButton $w={26} aria-label="重做"><Icon name="redo" /></QuickButton>
            <QuickButton $w={12} aria-label="重做清單"><Caret $dim /></QuickButton>
            <QuickButton $w={26} aria-label="重新產生"><Icon name="regen" /></QuickButton>
            <QuickButton aria-label="視窗"><Icon name="windows" /></QuickButton>
            <QuickButton $w={14} aria-label="視窗清單"><Caret /></QuickButton>
            <QuickButton aria-label="關閉"><svg width="14" height="14" viewBox="0 0 14 14"><path d="M3 3l8 8M11 3l-8 8" stroke="#222" strokeWidth="4" /><path d="M3 3l8 8M11 3l-8 8" stroke="#fff" strokeWidth="2" /></svg></QuickButton>
            <QuickDivider />
            <QuickButton $w={22} aria-label="自訂"><svg width="10" height="10" viewBox="0 0 10 10"><path d="M0 1.500h10M1 4.500h8L5 9z" fill="none" stroke="#d5d9d9" /></svg></QuickButton>
          </QuickBar>
          <Title>PRT0005(使用中) - Creo Parametric 12</Title>
          <WindowButtons>
            <button aria-label="最小化"><Icon name="min" /></button>
            <button aria-label="最大化"><Icon name="max" /></button>
            <button aria-label="關閉視窗"><Icon name="x" /></button>
          </WindowButtons>
        </TitleBar>

        <TabBar>
          <Tab $kind="file">檔案</Tab>
          <Tab $kind="active">模型</Tab>
          {['分析', '即時模擬', '註釋', '工具', '檢視', '彈性建模', '應用程式'].map((t) => <Tab key={t}>{t}</Tab>)}
          <TabTools>
            <button aria-label="收合功能區"><Icon name="collapse" /></button>
            <button aria-label="搜尋"><Icon name="search" /></button>
            <button aria-label="學習"><Icon name="learn" /></button>
            <Caret $dark />
            <button aria-label="說明"><Icon name="help" /></button>
          </TabTools>
        </TabBar>

        <Ribbon>
          {groups.map((g) => (
            <Group key={g.name} $w={g.w}>
              <GroupBody $pad={g.pad}>
                {g.parts.map((p, i) => p.kind === 'big' ? (
                  <BigButton key={i} $w={p.w}>
                    <Icon name={p.icon} size={33} />
                    {p.label}
                    {p.menu && <Caret />}
                  </BigButton>
                ) : (
                  <Column key={i} $w={p.w}>
                    {p.items.map((it) => (
                      <Command key={it.label} $dim={it.dim}>
                        <Icon name={it.icon} />
                        {it.label}
                        {it.menu && <Caret $dim={it.dim} />}
                      </Command>
                    ))}
                  </Column>
                ))}
              </GroupBody>
              <GroupMenu>{g.name}<Caret /></GroupMenu>
            </Group>
          ))}
        </Ribbon>

        <Main>
          <Side>
            <SideTabs>
              <SideTab $active aria-label="模型樹"><Icon name="treeTab" /></SideTab>
              <SideTab aria-label="資料夾瀏覽器"><Icon name="folders" /></SideTab>
            </SideTabs>
            <TreeTools>
              <TreeButton $w={12} aria-label="摺疊"><Svg width="12" height="10"><path d="M1 1h10L6 9z" fill="#b9bdbd" /></Svg></TreeButton>
              <TreeButton aria-label="主體"><Icon name="greenCube" /></TreeButton>
              <TreeButton $w={14} aria-label="更多"><Icon name="dots" /></TreeButton>
              <TreeButton aria-label="全部展開"><Icon name="treeExp" /></TreeButton>
              <TreeButton aria-label="全部收合"><Icon name="treeCol" /></TreeButton>
              <TreeButton $on aria-label="欄顯示"><Icon name="columns" /></TreeButton>
              <TreeDivider />
              <TreeButton aria-label="標籤"><Icon name="tag" /></TreeButton>
              <TreeDivider />
              <TreeButton aria-label="樹篩選"><Icon name="treeFilter" /></TreeButton>
              <TreeButton aria-label="樹欄"><Icon name="table" /></TreeButton>
              <TreeButton $w={16} aria-label="其他"><Icon name="more" size={10} /></TreeButton>
              <TreeButton $w={28} aria-label="設定"><Icon name="list" /></TreeButton>
            </TreeTools>
            <FilterRow>
              <Icon name="funnel" />
              <FilterBox>
                <FilterInput aria-label="篩選" value={query} onChange={(e) => setQuery(e.target.value)} />
                <TreeButton $w={18} aria-label="清除" onClick={() => setQuery('')}>
                  <svg width="9" height="9" viewBox="0 0 9 9"><path d="M1 1l7 7M8 1L1 8" stroke="#a5a9a9" /></svg>
                </TreeButton>
              </FilterBox>
              <Caret />
              <TreeButton aria-label="新增"><svg width="11" height="11" viewBox="0 0 11 11"><path d="M5.500 0v11M0 5.500h11" stroke="#858a8a" strokeWidth="3" /></svg></TreeButton>
            </FilterRow>
            <Tree>
              <li>
                <Node><Icon name="part" size={15} />PRT0005.PRT</Node>
                <Branch>
                  {children.map((n, i) => (
                    <li key={n.label}>
                      <ChildNode $dim={n.dim}>
                        <Twig viewBox="0 0 15 20">
                          <path d={n.open ? (i ? 'M8.500 0v6' : 'M8.500 0v6M8.500 15v5') : 'M8.500 0v20M8.500 10.500h8'} stroke="#858a8a" />
                          {n.open && <path d="M6 7l4 4-4 4z" fill="#dfe3e3" />}
                        </Twig>
                        <Icon name={n.icon} size={n.icon === 'planeS' ? 17 : 18} />
                        {n.label}
                      </ChildNode>
                    </li>
                  ))}
                </Branch>
              </li>
            </Tree>
          </Side>

          <Canvas>
            <ModelView viewBox="273 163 1100 599" role="img" aria-label="3D 模型">
              <g stroke="#000" strokeLinejoin="round">
                <path d="M633 268.500H885L831.500 442.500H579z" fill="#abb9cb" />
                <path d="M885 268.500L985 470 932 645.500 831.500 442.500z" fill="#565d68" />
                <path d="M579 442.500H831.500L932 645.500H679z" fill="#6f7681" />
              </g>
              <g fill="none" stroke="#80494f">
                <path d="M632 267.500H886L987 470 933 646.500H677L578 442.500z" />
                <path d="M632 266L734 468.500H987M630 269L731 472.500H986M730 468L676 646M734 471L680 647" />
                <circle cx="632" cy="268" r="2" />
                <circle cx="732" cy="470" r="2" />
                <circle cx="985" cy="470" r="2" />
                <circle cx="678" cy="645" r="2" />
              </g>
            </ModelView>
            <ViewBar>
              {viewTools.map((t) => (
                <ViewButton key={t.icon} $on={t.on} $menu={t.menu} $flag={t.flag} aria-label={t.label}><Icon name={t.icon} /></ViewButton>
              ))}
            </ViewBar>
          </Canvas>
        </Main>

        <Status>
          <StatusButton $on aria-label="導覽器"><Icon name="layout" /></StatusButton>
          <StatusButton aria-label="瀏覽器"><Icon name="globe" /></StatusButton>
          <StatusButton aria-label="全螢幕"><Icon name="blank" /></StatusButton>
          <StatusDivider />
          <StatusEnd>
            <StatusDivider $gap={2} />
            <StatusDivider $gap={2} />
            <StatusButton aria-label="尋找"><Icon name="find" /></StatusButton>
            <Caret />
            <StatusDivider $gap={5} />
            <StatusButton aria-label="區域選取"><Icon name="region" /></StatusButton>
            <Caret />
            <StatusButton aria-label="選取"><Icon name="pick" /></StatusButton>
            <SelectBox>
              <FilterSelect aria-label="選取篩選"><option>幾何</option></FilterSelect>
              <SelectArrow><Caret /></SelectArrow>
            </SelectBox>
            <Svg width="14" height="24" viewBox="0 0 14 24"><path d="M1 23L13 11M5 23l8-8M9 23l4-4" stroke="#8a9090" strokeWidth="1.500" /></Svg>
          </StatusEnd>
        </Status>
      </Frame>
    </>
  );
}
